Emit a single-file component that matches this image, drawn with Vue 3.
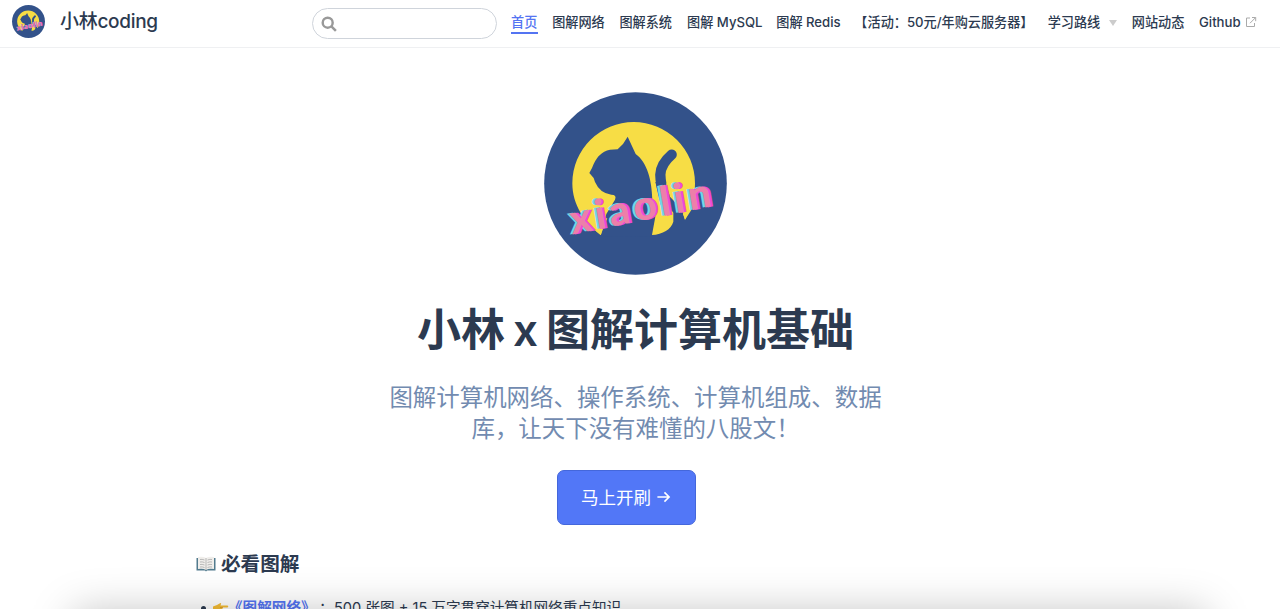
<script setup>
const links = [
  { text: '首页', active: true, w: 26.5 },
  { text: '图解网络', w: 52.5 },
  { text: '图解系统', w: 53 },
  { text: '图解 MySQL', w: 74.5 },
  { text: '图解 Redis', w: 64 },
  { text: '【活动：50元/年购云服务器】', w: 178, wide: true },
  { text: '学习路线', arrow: true, w: 69.5 },
  { text: '网站动态', w: 52.5 },
  { text: 'Github', external: true, w: 58 }
]
</script>

<template>
  <div class="page">
    <svg class="defs" aria-hidden="true">
      <symbol id="cat-logo" viewBox="42 36 549 549">
        <circle cx="316.500" cy="310.500" r="274" fill="#33528a" />
        <path d="M212 465C164 428 127 375 127 310A184 184 0 0 1 495 310C495 350 484 388 465 419L455 390L430 375L430 425C423 448 399 463 365 465L212 465Z" fill="#f7dd45" />
        <path d="M293 170L317 222C352 247 366 302 367 362L376 410L365 470L212 468L229 402L255 359Q261 344 244 344Q210 340 195 306L191 294L178 279L186 264Q203 216 240 209L263 208Q281 193 293 170Z" fill="#33528a" />
        <path d="M425 224C405 241 392 258 391 284Q391 310 407 370" fill="none" stroke="#33528a" stroke-width="31" stroke-linecap="round" />
        <path d="M404 310L460 380L465 402L435 402L390 360L376 306Z" fill="#33528a" />
        <path d="M408 308L424 330L463 365L480 380L484 390L465 419L455 388L420 350Z" fill="#f7dd45" />
        <path d="M212 465L194 450L206 422L232 414Z" fill="#f7dd45" />
        <g class="wordmark" transform="translate(126 464) rotate(-11.500) skewX(-2)">
          <text x="-6" y="-2" fill="#72d7e9" textLength="430">xiaolin</text>
          <text x="8" y="1" fill="#ee48d8" textLength="430">xiaolin</text>
          <text x="1" y="0" fill="#ed7fa9" textLength="430">xiaolin</text>
        </g>
      </symbol>
    </svg>

    <header class="navbar">
      <svg class="brand-logo"><use href="#cat-logo" /></svg>
      <span class="brand">小林coding</span>
      <div class="search">
        <svg viewBox="0 0 16 16"><circle cx="6.300" cy="6.300" r="4.700" /><path d="M9.800 9.800L14 14" /></svg>
      </div>
      <nav>
        <a v-for="link in links" :key="link.text" :class="{ active: link.active, wide: link.wide }" :style="{ width: link.w + 'px' }">
          <span>{{ link.text }}</span>
          <i v-if="link.arrow" class="caret"></i>
          <svg v-if="link.external" class="external" viewBox="0 0 12 12"><path d="M5 2H1.500V10.500H9.500V7M7 1.500H10.700V5.200M10.500 1.700L5 7.200" /></svg>
        </a>
      </nav>
    </header>

    <main>
      <section class="hero">
        <svg class="hero-logo"><use href="#cat-logo" /></svg>
        <h1>小林 x 图解计算机基础</h1>
        <p>图解计算机网络、操作系统、计算机组成、数据<br />库，让天下没有难懂的八股文！</p>
        <a class="action"><span>马上开刷</span>
          <svg viewBox="0 0 16 16"><path d="M1.500 8H14M9 3L14 8L9 13" /></svg>
        </a>
      </section>
      <section class="content">
        <h2>
          <svg class="book" viewBox="0 0 20 16">
            <path d="M.5 2H19.500V14.500H11L10 15.500L9 14.500H.5Z" fill="#527b8e" />
            <path d="M2 1Q7 0 10 2Q13 0 18 1V13Q13 12 10 14Q7 12 2 13Z" fill="#f0eeeb" />
            <path d="M10 2V14M4 3.500Q6 3 8.500 4M4 6Q6 5.500 8.500 6.500M4 8.500Q6 8 8.500 9M4 11Q6 10.500 8.500 11.500M11.500 4Q14 3 16 3.500M11.500 6.500Q14 5.500 16 6M11.500 9Q14 8 16 8.500M11.500 11.500Q14 10.500 16 11" fill="none" stroke="#aaa9aa" stroke-width=".8" />
          </svg>
          必看图解
        </h2>
        <div class="entry">
          <span class="dot"></span>
          <svg class="hand" viewBox="0 0 16 14">
            <path d="M0 5.500L4 4L7 2.200Q8.500 1.700 8 3L7.500 4.500H14.500Q16 5.300 14.500 6.500H9.500V11L7 13H3L0 11Z" fill="#f5bd35" />
            <path d="M7 6.500H10M6 9H10" stroke="#d18a21" stroke-width=".6" />
          </svg>
          <b>《图解网络》</b><span class="colon">：</span><span>500 张图 + 15 万字贯穿计算机网络重点知识</span>
        </div>
      </section>
    </main>
    <div class="bottom-shadow"></div>
  </div>
</template>

<style>
body { margin: 0; background: #fff; overflow: hidden; }
</style>

<style scoped>
.page { position: relative; width: 1280px; height: 609px; overflow: hidden; background: #fff; color: #2c3a50; font-family: Inter, "Noto Sans CJK SC", sans-serif; }
.defs { position: absolute; width: 0; height: 0; }
.wordmark { font: 900 122px Lato, sans-serif; }
.navbar { display: flex; align-items: flex-start; height: 47px; padding-left: 12px; border-bottom: 1px solid #eff0f2; box-sizing: content-box; width: 1268px; }
.brand-logo { width: 33px; height: 33px; margin-top: 5px; flex: none; }
.brand { width: 97px; margin: 0 155px 0 15px; flex: none; white-space: nowrap; font-size: 19px; letter-spacing: -.3px; line-height: 44px; font-weight: 500; }
.search { box-sizing: border-box; width: 185px; height: 31px; margin: 8px 14px 0 0; padding: 7px 8px; border: 1px solid #cfd4db; border-radius: 16px; flex: none; }
.search svg { display: block; width: 17px; height: 17px; fill: none; stroke: #999; stroke-width: 2.300; }
nav { display: flex; gap: 14.700px; height: 34px; font-size: 13.150px; font-weight: 500; line-height: 44px; white-space: nowrap; }
nav a { display: flex; align-items: center; height: 34px; box-sizing: border-box; flex: none; }
nav a span { line-height: 44px; height: 34px; }
nav .active { color: #5474f2; border-bottom: 2px solid #5474f2; }
nav .active span { height: 32px; }
nav .wide { justify-content: center; }
.caret { margin: 12px 0 0 9px; border: 4px solid transparent; border-top: 6px solid #ccc; border-bottom: 0; }
.external { width: 12px; height: 12px; margin: 10px 0 0 4px; fill: none; stroke: #aaa; stroke-width: 1; }
.hero { display: flex; flex-direction: column; align-items: center; width: 1271px; }
.hero-logo { width: 183px; height: 183px; margin-top: 44px; }
h1 { height: 70px; margin: 20px 0 0; font-size: 44px; line-height: 70px; font-weight: 600; word-spacing: -3px; white-space: nowrap; }
p { margin: 18px 0 0; color: #728bb0; font-size: 23.450px; line-height: 30.500px; text-align: center; white-space: nowrap; }
.action { display: flex; align-items: center; justify-content: center; box-sizing: border-box; width: 139px; height: 55px; margin: 25.500px 19px 0 0; border: 1px solid #4467db; border-radius: 7px; background: #5277f7; color: #fff; font-size: 17.500px; }
.action span { margin-top: -2px; }
.action svg { width: 15px; height: 16px; margin-left: 5px; fill: none; stroke: #fff; stroke-width: 1.700; }
.content { padding-left: 196px; }
h2 { display: flex; align-items: center; height: 30px; margin: 24px 0 0; font-size: 19.600px; font-weight: 600; line-height: 30px; }
.book { width: 20px; height: 16px; margin-right: 5px; }
.entry { display: flex; align-items: center; height: 24px; margin-top: 17px; padding-left: 5px; font-size: 14.600px; line-height: 24px; white-space: nowrap; }
.entry b { width: 88px; margin-left: -1px; color: #5474f2; font-weight: 600; }
.dot { width: 5px; height: 5px; margin: 2px 7px 0 0; border-radius: 50%; background: #2c3a50; }
.hand { width: 16px; height: 14px; }
.colon { width: 18px; text-indent: 3px; }
.bottom-shadow { position: absolute; left: 74px; right: 74px; top: 613px; height: 100px; box-shadow: 0 0 44px rgba(0, 0, 0, .26); }
</style>
